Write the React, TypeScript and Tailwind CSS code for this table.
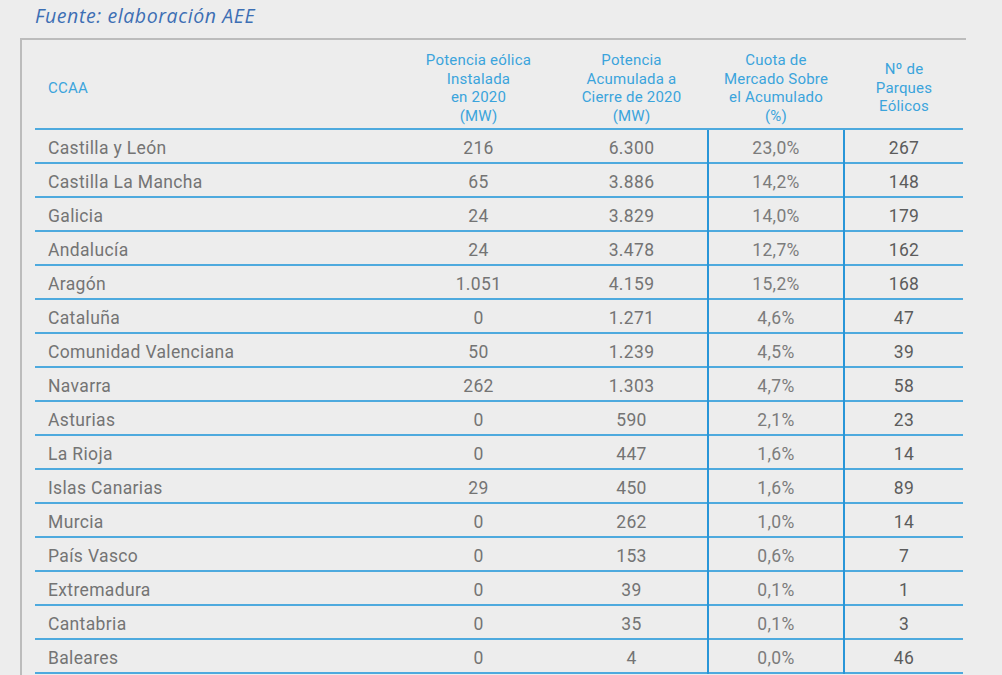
import React from "react";

const rows: [string, string, string, string, string][] = [
  ["Castilla y León", "216", "6.300", "23,0%", "267"],
  ["Castilla La Mancha", "65", "3.886", "14,2%", "148"],
  ["Galicia", "24", "3.829", "14,0%", "179"],
  ["Andalucía", "24", "3.478", "12,7%", "162"],
  ["Aragón", "1.051", "4.159", "15,2%", "168"],
  ["Cataluña", "0", "1.271", "4,6%", "47"],
  ["Comunidad Valenciana", "50", "1.239", "4,5%", "39"],
  ["Navarra", "262", "1.303", "4,7%", "58"],
  ["Asturias", "0", "590", "2,1%", "23"],
  ["La Rioja", "0", "447", "1,6%", "14"],
  ["Islas Canarias", "29", "450", "1,6%", "89"],
  ["Murcia", "0", "262", "1,0%", "14"],
  ["País Vasco", "0", "153", "0,6%", "7"],
  ["Extremadura", "0", "39", "0,1%", "1"],
  ["Cantabria", "0", "35", "0,1%", "3"],
  ["Baleares", "0", "4", "0,0%", "46"],
];

export default function App() {
  return (
    <div className="w-[1002px] h-[675px] overflow-hidden bg-[#ededed] font-['Roboto',sans-serif]">
      <div className="h-[38px] pl-[35px] pt-[3px] font-['Open_Sans',sans-serif] italic text-[19.5px] leading-[26px] tracking-[0.6px] text-[#3d6fb4]">
        Fuente: elaboración AEE
      </div>
      <div className="ml-[20px] w-[946px] h-[700px] border-l-2 border-t-2 border-[#bcbcbc] pl-[13px]">
        <div className="w-[928px]">
          <div className="grid grid-cols-[366px_155px_151px_138px_118px] h-[90px] pt-[8px] border-b-2 border-[#4eaade] text-[#3ba4dc] text-[15px] leading-[18.5px] tracking-[0.2px] items-center">
            <div className="pl-[13px]">CCAA</div>
            <div className="text-center">Potencia eólica<br />Instalada<br />en 2020<br />(MW)</div>
            <div className="text-center">Potencia<br />Acumulada a<br />Cierre de 2020<br />(MW)</div>
            <div className="text-center">Cuota de<br />Mercado Sobre<br />el Acumulado<br />(%)</div>
            <div className="text-center">Nº de<br />Parques<br />Eólicos</div>
          </div>
          {rows.map((r) => (
            <div
              key={r[0]}
              className="grid grid-cols-[366px_155px_151px_138px_118px] h-[34px] border-b-2 border-[#4eaade] text-[17.5px] tracking-[0.35px] text-[#747474]"
            >
              <div className="pl-[13px] pt-[4px] flex items-center">{r[0]}</div>
              <div className="pt-[4px] flex items-center justify-center">{r[1]}</div>
              <div className="pt-[4px] flex items-center justify-center">{r[2]}</div>
              <div className="pt-[4px] pb-[2px] flex items-center justify-center border-l-2 border-r-2 border-[#2996d8] -mb-[2px] text-[#7c7c7c]">{r[3]}</div>
              <div className="pt-[4px] flex items-center justify-center text-[#5c5c5c]">{r[4]}</div>
            </div>
          ))}
        </div>
      </div>
    </div>
  );
}
